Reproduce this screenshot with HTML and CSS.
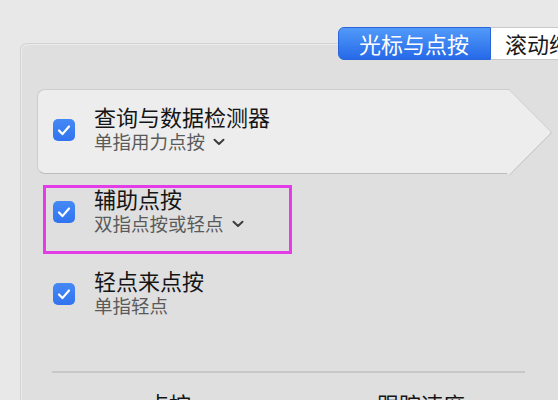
FILE: index.html
```html
<!DOCTYPE html>
<html lang="zh-CN">
<head>
    <meta charset="UTF-8">
    <meta name="viewport" content="width=device-width, initial-scale=1.0">
    <title>触控板</title>
    <link rel="stylesheet" href="styles.css">
</head>
<body>
    <div class="window">
        <!-- Segmented tabs -->
        <div class="tabs">
            <div class="tab tab-active">光标与点按</div>
            <div class="tab">滚动缩放</div>
        </div>

        <div class="panel">
            <ul class="options">
                <li class="option option-selected">
                    <span class="checkbox">
                        <svg viewBox="0 0 22 22"><path d="M6 11.5l3.4 3.6L16 7.5" fill="none" stroke="#fff" stroke-width="2.2" stroke-linecap="round" stroke-linejoin="round"/></svg>
                    </span>
                    <div class="option-text">
                        <div class="option-title">查询与数据检测器</div>
                        <div class="option-sub">单指用力点按
                            <svg class="chevron" viewBox="0 0 12 8"><path d="M1.5 1.8L6 6l4.5-4.2" fill="none" stroke="#3c3c3c" stroke-width="2" stroke-linecap="round" stroke-linejoin="round"/></svg>
                        </div>
                    </div>
                </li>
                <li class="option option-marked">
                    <span class="checkbox">
                        <svg viewBox="0 0 22 22"><path d="M6 11.5l3.4 3.6L16 7.5" fill="none" stroke="#fff" stroke-width="2.2" stroke-linecap="round" stroke-linejoin="round"/></svg>
                    </span>
                    <div class="option-text">
                        <div class="option-title">辅助点按</div>
                        <div class="option-sub">双指点按或轻点
                            <svg class="chevron" viewBox="0 0 12 8"><path d="M1.5 1.8L6 6l4.5-4.2" fill="none" stroke="#3c3c3c" stroke-width="2" stroke-linecap="round" stroke-linejoin="round"/></svg>
                        </div>
                    </div>
                </li>
                <li class="option">
                    <span class="checkbox">
                        <svg viewBox="0 0 22 22"><path d="M6 11.5l3.4 3.6L16 7.5" fill="none" stroke="#fff" stroke-width="2.2" stroke-linecap="round" stroke-linejoin="round"/></svg>
                    </span>
                    <div class="option-text">
                        <div class="option-title">轻点来点按</div>
                        <div class="option-sub">单指轻点</div>
                    </div>
                </li>
            </ul>

            <div class="divider"></div>

            <div class="columns">
                <div class="column-label">点按</div>
                <div class="column-label">跟踪速度</div>
            </div>
        </div>
    </div>
</body>
</html>
```

FILE: styles.css
```css
:root {
    --color-background: #e8e8e8;
    --color-panel: #dfdfdf;
    --color-card: #ededed;
    --color-card-border: #cdcdcd;
    --color-text: #151515;
    --color-text-secondary: #5a5a5a;
    --color-mark: #e23de6;
}

* {
    margin: 0;
    padding: 0;
    box-sizing: border-box;
}

body {
    font-family: "Noto Sans CJK SC", "Noto Sans", sans-serif;
    background-color: var(--color-background);
    color: var(--color-text);
    width: 558px;
    height: 400px;
    overflow: hidden;
}

.window {
    padding-top: 27px;
}

/* Tabs */
.tabs {
    display: flex;
    padding-left: 338px;
    margin-bottom: -17px;
    position: relative;
    z-index: 2;
}

.tab {
    height: 33px;
    line-height: 31px;
    font-size: 22px;
    padding: 0 14px;
    background-color: #ffffff;
    border: 1px solid #c9c9c9;
    border-left: none;
    white-space: nowrap;
    color: #1a1a1a;
}

.tab-active {
    padding: 0 21px 0 20px;
    color: #ffffff;
    background: linear-gradient(#519af9, #2669e8);
    border: 1px solid #2a66d8;
    border-radius: 6px 0 0 6px;
}

/* Panel */
.panel {
    margin-left: 20px;
    width: 560px;
    height: 400px;
    padding: 45px 0 0 16px;
    background-color: var(--color-panel);
    border-top: 1px solid #d2d2d2;
    border-left: 1px solid #d2d2d2;
    border-radius: 7px 0 0 0;
    box-shadow: inset 1px 1px 0 #ececec;
}

.options {
    list-style: none;
}

.option {
    display: flex;
    height: 82px;
    padding: 14px 0 0 16px;
    position: relative;
}

.option-selected {
    width: 473px;
    height: 85px;
    margin-bottom: -3px;
    padding: 13px 0 0 15px;
    background-color: var(--color-card);
    border: 1px solid var(--color-card-border);
    border-right: none;
    border-bottom-color: #bdbdbd;
    border-radius: 8px 0 0 8px;
}

/* Arrow tip of the selected card */
.option-selected::after {
    content: "";
    position: absolute;
    top: 11.5px;
    right: -30px;
    width: 60px;
    height: 60px;
    background-color: var(--color-card);
    border-top: 1px solid var(--color-card-border);
    border-right: 1px solid #bdbdbd;
    border-top-right-radius: 3px;
    transform: rotate(45deg);
}

/* Annotation frame */
.option-marked::after {
    content: "";
    position: absolute;
    left: 6px;
    top: 14px;
    width: 243px;
    height: 63px;
    border: 3px solid var(--color-mark);
}

.checkbox {
    flex: none;
    width: 22px;
    height: 22px;
    margin-top: 16px;
    margin-right: 19px;
    border-radius: 5px;
    background: linear-gradient(#4589f6, #3173ee);
    display: flex;
}

.checkbox svg {
    width: 22px;
    height: 22px;
}

.option-title {
    font-size: 22px;
    line-height: 26px;
    color: var(--color-text);
}

.option-sub {
    font-size: 18.5px;
    line-height: 24px;
    color: var(--color-text-secondary);
    display: flex;
    align-items: center;
    gap: 8px;
}

.chevron {
    width: 12px;
    height: 8px;
    margin-top: 2px;
}

.divider {
    width: 473px;
    height: 2px;
    margin: 36px 0 0 15px;
    background-color: #c8c8c8;
}

.columns {
    display: flex;
    gap: 186px;
    padding: 17px 0 0 110px;
}

.column-label {
    font-size: 22px;
    line-height: 26px;
    color: var(--color-text);
}
```
